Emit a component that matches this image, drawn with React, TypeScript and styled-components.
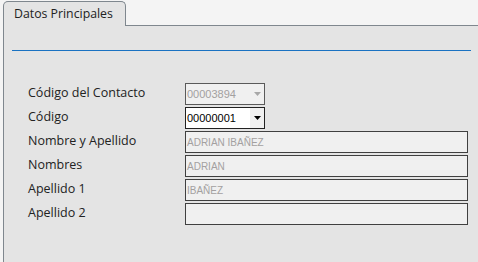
import React from "react";
import styled, { createGlobalStyle } from "styled-components";

const Global = createGlobalStyle`
  html, body { margin: 0; padding: 0; background: #f4f4f4; }
  body { font-family: "Open Sans", "Liberation Sans", sans-serif; }
  * { box-sizing: border-box; }
`;

const Page = styled.div`
  width: 478px;
  height: 262px;
  display: flex;
  flex-direction: column;
  background: #f4f4f4;
  overflow: hidden;
`;

const TabStrip = styled.div`
  display: flex;
  align-items: flex-end;
  height: 26px;
  padding-left: 3px;
`;

const Tab = styled.div`
  width: 123px;
  height: 25px;
  border: 1px solid #7f878e;
  border-bottom: none;
  border-radius: 5px 5px 0 0;
  background: #e4e4e4;
  padding: 4px 0 0 10px;
  font-size: 12.3px;
  line-height: 16px;
  color: #222;
`;

const TabFiller = styled.div`
  flex: 1;
  height: 26px;
  border-bottom: 1px solid #7f878e;
`;

const Panel = styled.div`
  flex: 1;
  margin-left: 3px;
  border-left: 1px solid #7f878e;
  background: #e4e4e4;
  padding: 24px 7px 0 8px;
`;

const Rule = styled.div`
  height: 1px;
  background: #1a72c2;
`;

const Form = styled.div`
  display: grid;
  grid-template-columns: 157px auto;
  row-gap: 2px;
  margin-top: 32px;
  padding-left: 16px;
  justify-items: start;
`;

const Label = styled.div`
  height: 22px;
  display: flex;
  align-items: center;
  font-size: 12.5px;
  color: #222;
  padding-bottom: 4px;
`;

const Select = styled.div<{ $disabled?: boolean }>`
  width: 80px;
  height: 22px;
  display: flex;
  align-items: stretch;
  border: 1px solid ${(p) => (p.$disabled ? "#5a5a5a" : "#222")};
  background: ${(p) => (p.$disabled ? "#f0f0f0" : "#fff")};
  font-family: "Liberation Sans", Arial, sans-serif;
  font-size: 11px;
  color: ${(p) => (p.$disabled ? "#a3a0a0" : "#000")};
`;

const SelectValue = styled.div`
  flex: 1;
  display: flex;
  align-items: center;
  padding-left: 1px;
`;

const SelectButton = styled.div<{ $disabled?: boolean }>`
  width: 14px;
  display: flex;
  align-items: center;
  justify-content: center;
  background: #f0f0f0;
  color: ${(p) => (p.$disabled ? "#a8a8a8" : "#000")};
`;

const TextBox = styled.div`
  width: 283px;
  height: 22px;
  display: flex;
  align-items: center;
  border: 1px solid #404040;
  background: #f0f0f0;
  padding-left: 1px;
  font-family: "Liberation Sans", Arial, sans-serif;
  font-size: 10px;
  color: #a3a0a0;
`;

const Arrow = () => (
  <svg width="7" height="4" viewBox="0 0 7 4">
    <polygon points="0,0 7,0 3.5,4" fill="currentColor" />
  </svg>
);

const fields: [string, string][] = [
  ["Nombre y Apellido", "ADRIAN IBAÑEZ"],
  ["Nombres", "ADRIAN"],
  ["Apellido 1", "IBAÑEZ"],
  ["Apellido 2", ""],
];

export default function App() {
  return (
    <Page>
      <Global />
      <TabStrip>
        <Tab>Datos Principales</Tab>
        <TabFiller />
      </TabStrip>
      <Panel>
        <Rule />
        <Form>
          <Label>Código del Contacto</Label>
          <Select $disabled>
            <SelectValue>00003894</SelectValue>
            <SelectButton $disabled>
              <Arrow />
            </SelectButton>
          </Select>
          <Label>Código</Label>
          <Select>
            <SelectValue>00000001</SelectValue>
            <SelectButton>
              <Arrow />
            </SelectButton>
          </Select>
          {fields.map(([label, value]) => (
            <React.Fragment key={label}>
              <Label>{label}</Label>
              <TextBox>{value}</TextBox>
            </React.Fragment>
          ))}
        </Form>
      </Panel>
    </Page>
  );
}
